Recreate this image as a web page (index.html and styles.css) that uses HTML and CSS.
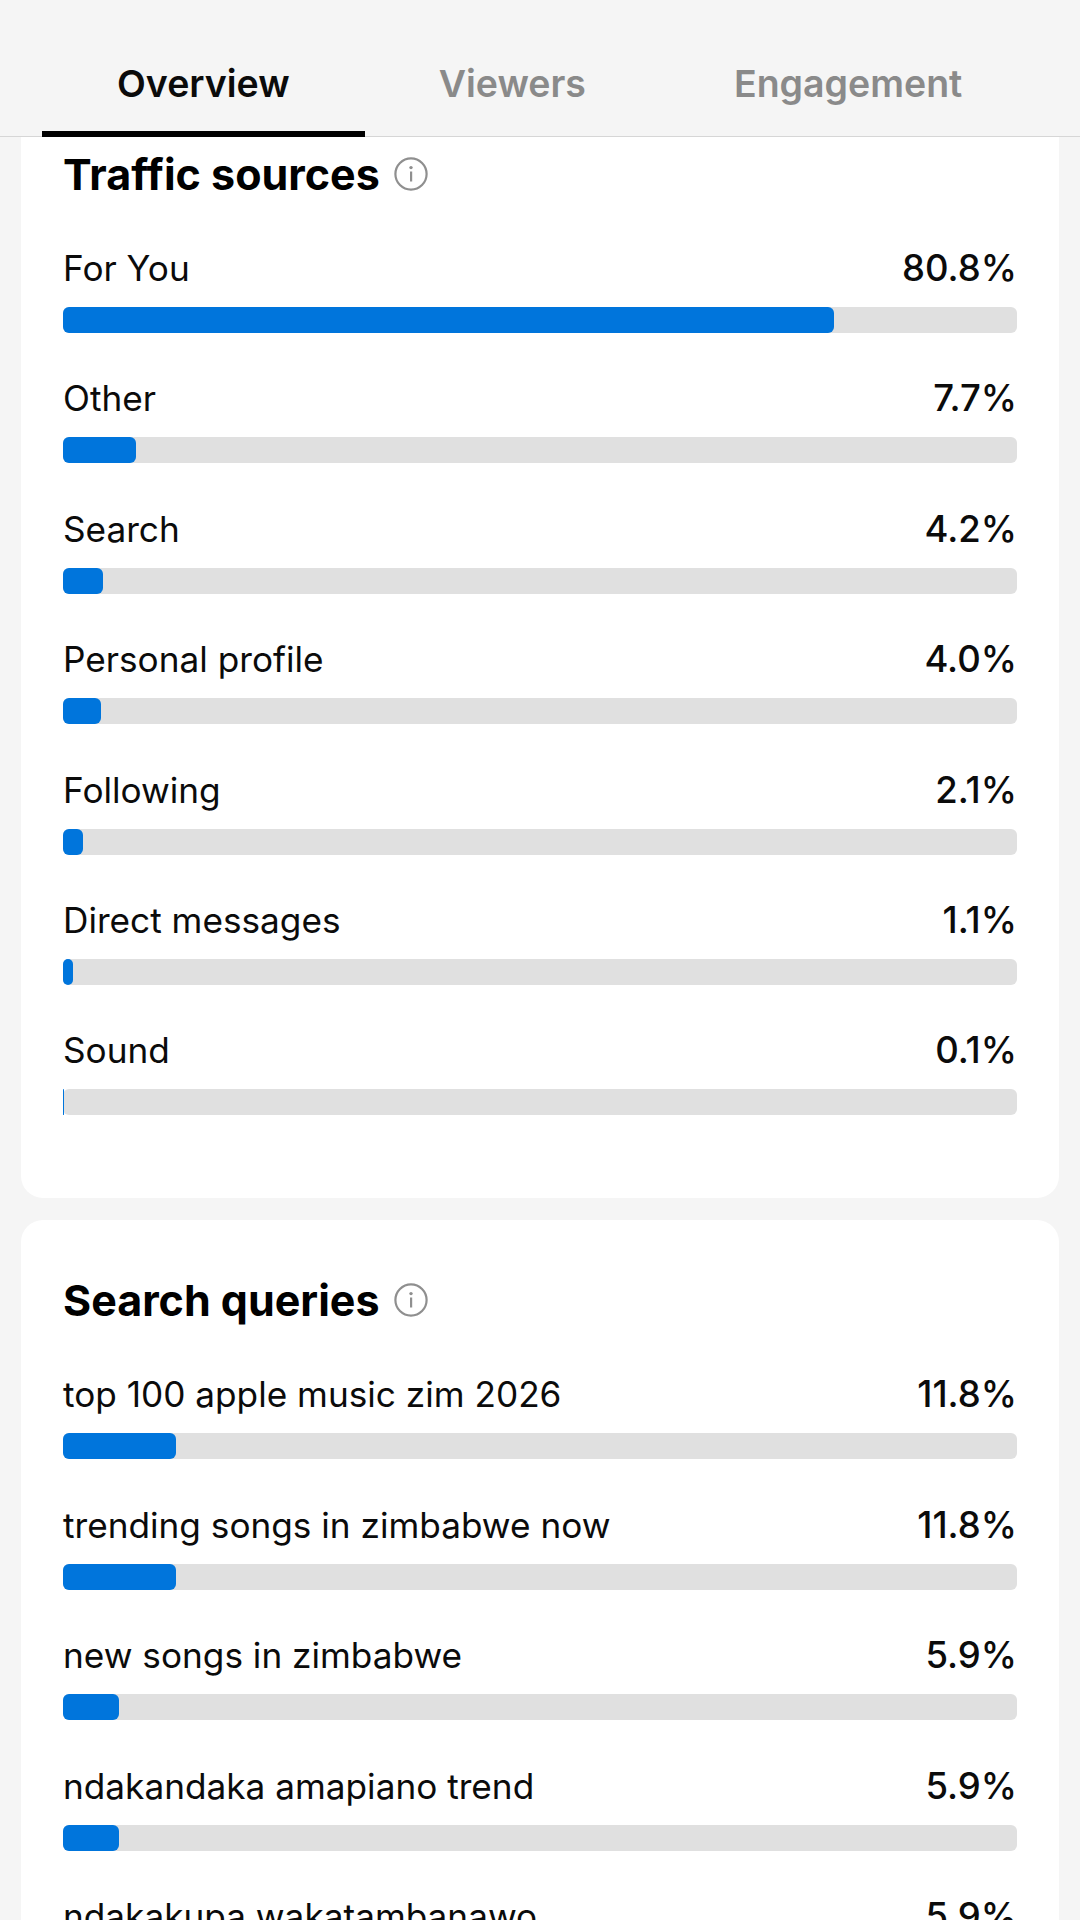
FILE: index.html
```html
<!DOCTYPE html>
<html lang="en">
<head>
<meta charset="utf-8">
<title>Analytics</title>
<link rel="stylesheet" href="styles.css">
</head>
<body>
<header class="tabs">
  <div class="tab active">Overview</div>
  <div class="tab">Viewers</div>
  <div class="tab">Engagement</div>
</header>
<main class="content">
  <section class="card first">
    <h2 class="title">Traffic sources
      <svg class="info" viewBox="0 0 34 34"><circle cx="17" cy="17" r="15.6" fill="none" stroke="#8f8f8f" stroke-width="2.2"/><circle cx="17" cy="10.6" r="1.7" fill="#8f8f8f"/><rect x="16" y="14.5" width="2.2" height="10" fill="#8f8f8f"/></svg>
    </h2>
    <div class="rows">
      <div class="row"><div class="line"><span>For You</span><span class="val">80.8%</span></div><div class="track"><div class="fill" style="width:80.8%"></div></div></div>
      <div class="row"><div class="line"><span>Other</span><span class="val">7.7%</span></div><div class="track"><div class="fill" style="width:7.7%"></div></div></div>
      <div class="row"><div class="line"><span>Search</span><span class="val">4.2%</span></div><div class="track"><div class="fill" style="width:4.2%"></div></div></div>
      <div class="row"><div class="line"><span>Personal profile</span><span class="val">4.0%</span></div><div class="track"><div class="fill" style="width:4.0%"></div></div></div>
      <div class="row"><div class="line"><span>Following</span><span class="val">2.1%</span></div><div class="track"><div class="fill" style="width:2.1%"></div></div></div>
      <div class="row"><div class="line"><span>Direct messages</span><span class="val">1.1%</span></div><div class="track"><div class="fill" style="width:1.1%"></div></div></div>
      <div class="row"><div class="line"><span>Sound</span><span class="val">0.1%</span></div><div class="track"><div class="fill" style="width:0.1%"></div></div></div>
    </div>
  </section>
  <section class="card second">
    <h2 class="title">Search queries
      <svg class="info" viewBox="0 0 34 34"><circle cx="17" cy="17" r="15.6" fill="none" stroke="#8f8f8f" stroke-width="2.2"/><circle cx="17" cy="10.6" r="1.7" fill="#8f8f8f"/><rect x="16" y="14.5" width="2.2" height="10" fill="#8f8f8f"/></svg>
    </h2>
    <div class="rows">
      <div class="row"><div class="line"><span>top 100 apple music zim 2026</span><span class="val">11.8%</span></div><div class="track"><div class="fill" style="width:11.8%"></div></div></div>
      <div class="row"><div class="line"><span>trending songs in zimbabwe now</span><span class="val">11.8%</span></div><div class="track"><div class="fill" style="width:11.8%"></div></div></div>
      <div class="row"><div class="line"><span>new songs in zimbabwe</span><span class="val">5.9%</span></div><div class="track"><div class="fill" style="width:5.9%"></div></div></div>
      <div class="row"><div class="line"><span>ndakandaka amapiano trend</span><span class="val">5.9%</span></div><div class="track"><div class="fill" style="width:5.9%"></div></div></div>
      <div class="row"><div class="line"><span>ndakakupa wakatambanawo</span><span class="val">5.9%</span></div><div class="track"><div class="fill" style="width:5.9%"></div></div></div>
    </div>
  </section>
</main>
</body>
</html>
```
FILE: styles.css
```css
* { box-sizing: border-box; }
html, body { margin: 0; padding: 0; }
body {
  width: 1080px;
  height: 1920px;
  overflow: hidden;
  background: #f5f5f5;
  font-family: Inter, Roboto, "Liberation Sans", sans-serif;
  color: #0b0b0b;
}
.tabs {
  display: flex;
  align-items: stretch;
  height: 137px;
  padding-left: 42px;
  border-bottom: 1px solid #d6d6d6;
}
.tab {
  padding: 64px 74px 0;
  font-size: 37.5px;
  line-height: 40px;
  font-weight: 600;
  color: #8a8a8a;
  white-space: nowrap;
}
.tab.active {
  padding-left: 75px;
  padding-right: 75px;
  color: #0b0b0b;
  border-bottom: 6px solid #000;
  margin-bottom: -1px;
}
.content {
  display: flex;
  flex-direction: column;
  gap: 22px;
  padding: 0 21px;
}
.card {
  background: #fff;
  border-radius: 22px;
  padding-left: 42px;
  padding-right: 42px;
}
.card.first {
  padding-top: 17px;
  padding-bottom: 83px;
  border-top-left-radius: 0;
  border-top-right-radius: 0;
}
.card.second { padding-top: 60px; }
.title {
  display: flex;
  align-items: center;
  gap: 14px;
  margin: 0 0 54px;
  height: 40px;
  font-size: 43px;
  line-height: 40px;
  font-weight: 700;
  color: #000;
}
.info { width: 34px; height: 34px; flex: none; }
.rows { display: flex; flex-direction: column; gap: 45.4px; }
.line {
  display: flex;
  justify-content: space-between;
  align-items: center;
  height: 40px;
  font-size: 35.2px;
  line-height: 40px;
  font-weight: 400;
}
.val { font-size: 36.5px; font-weight: 500; }
.track {
  margin-top: 19px;
  height: 26px;
  border-radius: 6px;
  background: #e0e0e0;
}
.fill {
  height: 100%;
  min-width: 1px;
  border-radius: 6px;
  background: #0075dc;
}
```
